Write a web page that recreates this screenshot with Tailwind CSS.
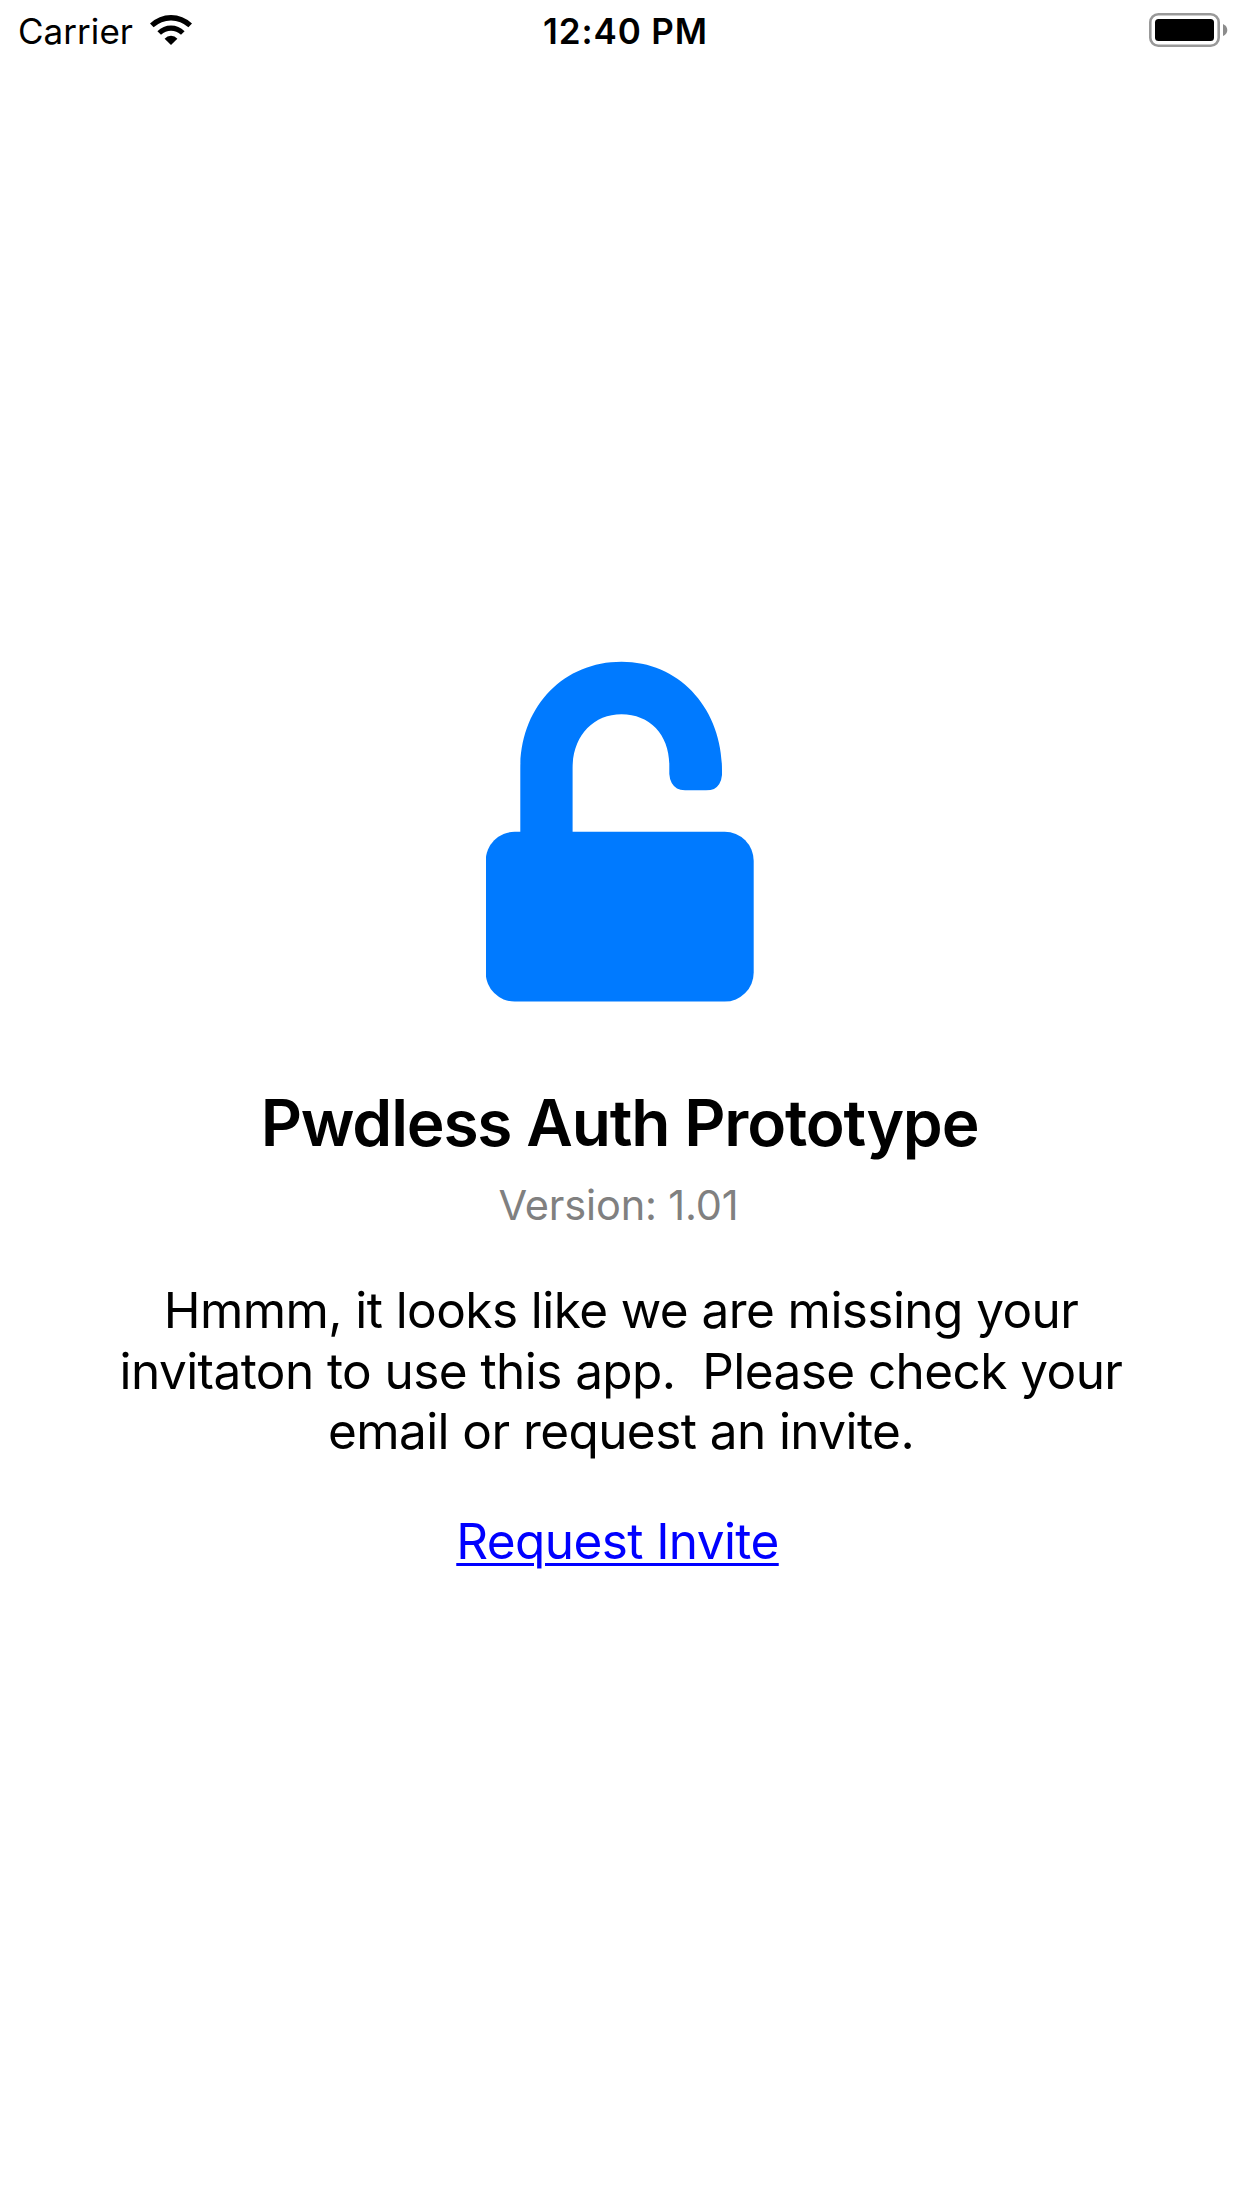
<!DOCTYPE html>
<html lang="en">
<head>
<meta charset="utf-8">
<title>Pwdless Auth Prototype</title>
<script src="https://cdn.jsdelivr.net/npm/@tailwindcss/browser@4"></script>
</head>
<body class="flex h-[2208px] w-[1242px] flex-col overflow-hidden bg-white font-['Inter',sans-serif] text-black">
  <header class="grid h-[60px] grid-cols-3 items-center pl-[18px] pr-[14px] text-[35px] leading-[58px]">
    <div class="flex items-center">
      <span class="pt-[2px] tracking-[0.05px]">Carrier</span>
      <svg class="ml-[17px] h-[30px] w-[42px]" viewBox="0 0 42 30" fill="black" aria-label="Wi-Fi">
        <path d="M0 8.6Q9 0 21 0T42 8.6L38.4 12.3Q30.8 5.4 21 5.4T3.6 12.3Z"/>
        <path d="M7.4 16.2Q13.2 10.4 21 10.4T34.6 16.2L31 19.8Q26.5 15.8 21 15.8T11 19.8Z"/>
        <path d="M14.6 23.7Q17.2 20.8 21 20.8T27.4 23.7L21 30Z"/>
      </svg>
    </div>
    <time class="pt-[2px] pl-[5px] text-center font-semibold tracking-[0.9px]">12:40 PM</time>
    <svg class="h-[34px] w-[79px] justify-self-end" viewBox="0 0 79 34" aria-label="Battery full">
      <rect x="1.3" y="1.3" width="68.4" height="31.4" rx="8" fill="none" stroke="#999" stroke-width="2.6"/>
      <rect x="6" y="6" width="59" height="22" rx="3.5" fill="black"/>
      <path d="M74 11Q78.3 13 78.3 17T74 23Z" fill="#8c8c8c"/>
    </svg>
  </header>

  <main class="flex flex-col items-center pt-[601px]">
    <svg class="-ml-[2px] h-[341px] w-[268px]" viewBox="486 661 268 341" fill="#007aff" aria-label="Unlocked">
      <rect x="485.7" y="831.8" width="268" height="169.8" rx="29"/>
      <path d="M520.3 840V768C520.3 707 563 661.7 621.5 661.7S722 709 722 770V775Q721 785 714 789Q711 790.3 706 790.3H685Q680 790.3 677 788.5Q670 784 669.3 774V765C669.3 735 650 714.2 621.5 714.2S572.6 736 572.6 768V840Z"/>
    </svg>
    <h1 class="mt-[81px] -ml-[3px] text-[64px] leading-[80px] font-semibold tracking-[-1.17px]">Pwdless Auth Prototype</h1>
    <p class="mt-[17px] -ml-[5px] text-[41.5px] leading-[50px] tracking-[-0.15px] text-[#808080]">Version: 1.01</p>
    <p class="mt-[50px] text-center text-[49.5px] leading-[60.5px] tracking-[-0.57px] whitespace-pre">Hmmm, it looks like we are missing your
invitaton to use this app.  Please check your
email or request an invite.</p>
    <a href="#" class="mt-[49px] -ml-[7px] text-[49.5px] leading-[61px] tracking-[-0.6px] text-[#0000ff] underline decoration-[3px] underline-offset-[4px]">Request Invite</a>
  </main>
</body>
</html>
